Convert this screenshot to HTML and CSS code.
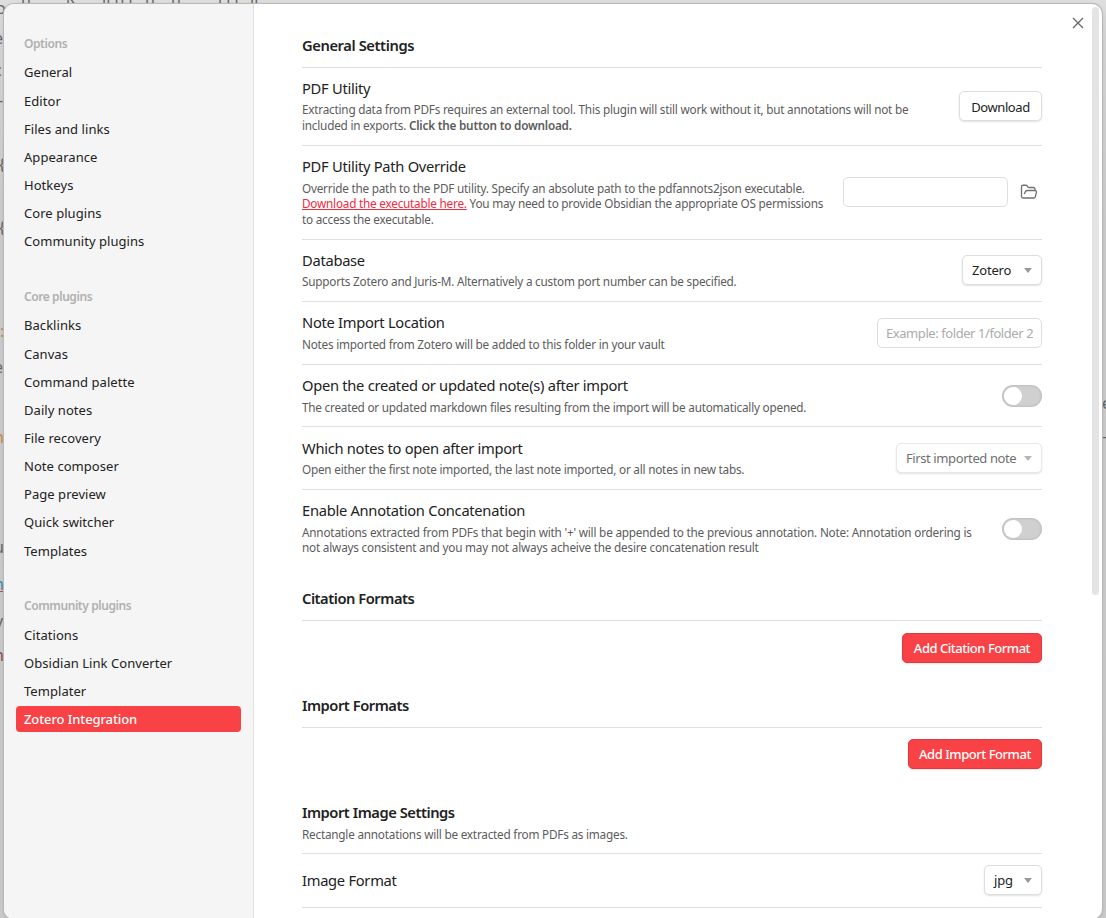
FILE: index.html
```html
<!DOCTYPE html>
<html lang="en">
<head>
<meta charset="utf-8">
<title>Settings</title>
<link rel="stylesheet" href="styles.css">
</head>
<body>
<div class="backdrop">
  <span class="frag" style="left:-4px;top:-3px">o</span>
  <span class="frag" style="left:21px;top:-14px">h</span>
  <span class="frag" style="left:66px;top:-14px">k</span>
  <span class="frag" style="left:102px;top:-14px">ll&nbsp;h&nbsp;l</span>
  <span class="frag" style="left:145px;top:-14px">h</span>
  <span class="frag" style="left:171px;top:-14px">h</span>
  <span class="frag" style="left:218px;top:-14px">l&nbsp;l&nbsp;l</span>
  <span class="frag" style="left:250px;top:-14px">ll</span>
  <span class="frag" style="left:-6px;top:27px">e</span>
  <span class="frag" style="left:-6px;top:59px">c</span>
  <span class="frag" style="left:-2px;top:89px">-</span>
  <span class="frag" style="left:-1px;top:153px">{</span>
  <span class="frag" style="left:-1px;top:216px">{</span>
  <span class="frag amber" style="left:0;top:320px">:</span>
  <span class="frag" style="left:-6px;top:356px">e</span>
  <span class="frag amber" style="left:-6px;top:426px">n</span>
  <span class="frag" style="left:-6px;top:536px">u</span>
  <span class="frag blue" style="left:-6px;top:573px">n</span>
  <span class="frag" style="left:-5px;top:610px">v</span>
  <span class="frag red" style="left:-6px;top:644px">n</span>
  <span class="frag" style="left:1102px;top:392px">e</span>
  <span class="frag" style="left:1102px;top:425px">-</span>
</div>
<div class="modal">
  <nav class="sidebar">
    <section class="group">
      <h2>Options</h2>
      <a>General</a><a>Editor</a><a>Files and links</a><a>Appearance</a><a>Hotkeys</a><a>Core plugins</a><a>Community plugins</a>
    </section>
    <section class="group">
      <h2>Core plugins</h2>
      <a>Backlinks</a><a>Canvas</a><a>Command palette</a><a>Daily notes</a><a>File recovery</a><a>Note composer</a><a>Page preview</a><a>Quick switcher</a><a>Templates</a>
    </section>
    <section class="group">
      <h2>Community plugins</h2>
      <a>Citations</a><a>Obsidian Link Converter</a><a>Templater</a><a class="active">Zotero Integration</a>
    </section>
  </nav>
  <main class="content">
    <h3 class="heading first">General Settings</h3>
    <div class="row">
      <div class="info"><div class="name">PDF Utility</div>
        <div class="desc">Extracting data from PDFs requires an external tool. This plugin will still work without it, but annotations will not be<br>included in exports. <b>Click the button to download.</b></div></div>
      <button class="btn">Download</button>
    </div>
    <div class="row">
      <div class="info"><div class="name">PDF Utility Path Override</div>
        <div class="desc">Override the path to the PDF utility. Specify an absolute path to the pdfannots2json executable.<br><a class="link">Download the executable here.</a> You may need to provide Obsidian the appropriate OS permissions<br>to access the executable.</div></div>
      <input class="field" type="text">
      <svg class="folder" viewBox="0 0 24 24"><path d="m6 14 1.5-2.9A2 2 0 0 1 9.24 10H20a2 2 0 0 1 1.94 2.5l-1.54 6a2 2 0 0 1-1.95 1.5H4a2 2 0 0 1-2-2V5a2 2 0 0 1 2-2h3.9a2 2 0 0 1 1.69.9l.81 1.2a2 2 0 0 0 1.67.9H18a2 2 0 0 1 2 2v2"/></svg>
    </div>
    <div class="row">
      <div class="info"><div class="name">Database</div>
        <div class="desc">Supports Zotero and Juris-M. Alternatively a custom port number can be specified.</div></div>
      <div class="select zotero">Zotero<i></i></div>
    </div>
    <div class="row">
      <div class="info"><div class="name">Note Import Location</div>
        <div class="desc">Notes imported from Zotero will be added to this folder in your vault</div></div>
      <input class="field" type="text" placeholder="Example: folder 1/folder 2">
    </div>
    <div class="row">
      <div class="info"><div class="name">Open the created or updated note(s) after import</div>
        <div class="desc">The created or updated markdown files resulting from the import will be automatically opened.</div></div>
      <div class="toggle"></div>
    </div>
    <div class="row">
      <div class="info"><div class="name">Which notes to open after import</div>
        <div class="desc">Open either the first note imported, the last note imported, or all notes in new tabs.</div></div>
      <div class="select disabled">First imported note<i></i></div>
    </div>
    <div class="row">
      <div class="info"><div class="name">Enable Annotation Concatenation</div>
        <div class="desc wide">Annotations extracted from PDFs that begin with '+' will be appended to the previous annotation. Note: Annotation ordering is<br>not always consistent and you may not always acheive the desire concatenation result</div></div>
      <div class="toggle"></div>
    </div>
    <h3 class="heading">Citation Formats</h3>
    <div class="row action"><button class="btn cta citation">Add Citation Format</button></div>
    <h3 class="heading">Import Formats</h3>
    <div class="row action"><button class="btn cta import">Add Import Format</button></div>
    <div class="image-head">
      <h3 class="heading">Import Image Settings</h3>
      <div class="desc">Rectangle annotations will be extracted from PDFs as images.</div>
    </div>
    <div class="row format"><div class="info"><div class="name solo">Image Format</div></div><div class="select jpg">jpg<i></i></div></div>
    <div class="row"></div>
  </main>
  <svg class="close" viewBox="0 0 12 12"><path d="M1 1 11 11M11 1 1 11"/></svg>
  <div class="scrollbar"></div>
</div>
</body>
</html>
```
FILE: styles.css
```css
* { box-sizing: border-box; }
body {
  margin: 0;
  height: 918px;
  overflow: hidden;
  position: relative;
  font-family: "Noto Sans", "Open Sans", sans-serif;
  font-size: 13px;
  color: #222;
  background: #d9d9d9;
}
.backdrop {
  position: absolute;
  inset: 0;
  overflow: hidden;
  background: linear-gradient(#dedede 0, #d6d6d6 40px, #cdcdcd 220px, #cbcbcb 100%);
}
.frag { position: absolute; font-size: 16px; line-height: 22px; color: #666; }
.frag.amber { color: #c98b45; }
.frag.blue { color: #3f86b5; text-decoration: underline #d44; }
.frag.red { color: #8e4a4a; }
.modal {
  position: relative;
  display: flex;
  width: 1098px;
  height: 915px;
  margin: 4px 0 0 4px;
  border-radius: 10px;
  overflow: hidden;
  background: #fff;
  box-shadow: 0 0 0 1px #b8b8b8, 0 2px 6px rgba(0, 0, 0, .12);
}
.sidebar {
  flex: 0 0 250px;
  padding: 28.1px 12px 0;
  background: #f5f5f5;
  border-right: 1px solid #e0e0e0;
}
.group { margin-bottom: 30.6px; }
.sidebar h2 {
  margin: 0;
  height: 27.3px;
  padding: 0 8px;
  font-size: 12px;
  line-height: 24px;
  font-weight: 600;
  color: #b0b0b0;
  letter-spacing: -.42px;
}
.sidebar a {
  display: block;
  height: 26.17px;
  margin-bottom: 2px;
  padding: 0 8px;
  line-height: 26.2px;
  letter-spacing: .05px;
  border-radius: 4px;
}
.sidebar a.active { background: #f84245; color: #fff; font-weight: 500; letter-spacing: -.1px; }
.content { flex: 0 0 788px; padding: 0 0 0 48px; }
.heading {
  display: flex;
  align-items: flex-start;
  margin: 0;
  height: 53.1px;
  padding-top: 21px;
  font-size: 14.7px;
  line-height: 20px;
  font-weight: 600;
  letter-spacing: -.46px;
}
.heading.first { height: 62.6px; padding-top: 31px; letter-spacing: -.4px; }
.row {
  display: flex;
  align-items: center;
  border-top: 1px solid #e0e0e0;
  padding: 11.25px 0;
}
.info { flex: 1; white-space: nowrap; }
.name { font-size: 14.7px; line-height: 19.5px; margin-bottom: 4px; letter-spacing: -.28px; }
.name.solo { margin: 0; }
.desc { font-size: 11.75px; line-height: 15.6px; color: #5c5c5c; white-space: nowrap; letter-spacing: -.22px; }
.desc.wide { letter-spacing: -.2px; }
.desc b { font-weight: 600; }
.link { color: #f02b3d; text-decoration: underline; }
.btn, .field, .select {
  height: 30px;
  border: 1px solid #dedede;
  border-radius: 5px;
  background: #fff;
  font: 13px "Noto Sans", "Open Sans", sans-serif;
  color: #222;
}
.btn, .select { box-shadow: 0 1px 2px rgba(0, 0, 0, .12); white-space: nowrap; }
.btn { width: 83px; padding: 1px 0 0; letter-spacing: -.4px; }
.cta { padding: 0; background: #f84245; border-color: #dc3b42; color: #fff; font-weight: 500; letter-spacing: -.47px; }
.cta.citation { width: 140px; }
.cta.import { width: 134px; }
.field { width: 165px; padding: 0 8px; letter-spacing: -.43px; }
.field::placeholder { color: #ababab; opacity: 1; }
.folder {
  width: 18px;
  height: 18px;
  margin: 0 4px 0 12px;
  fill: none;
  stroke: #707070;
  stroke-width: 1.75;
  stroke-linecap: round;
  stroke-linejoin: round;
}
.select {
  display: flex;
  align-items: center;
  justify-content: space-between;
  width: 80px;
  padding: 0 9px;
  letter-spacing: -.2px;
}
.select i { border: 4.5px solid transparent; border-top: 5px solid #999; border-bottom: 0; }
.select.disabled { width: 146px; color: #707070; border-color: #e8e8e8; letter-spacing: -.4px; }
.select.disabled i { border-top-color: #b5b5b5; }
.select.jpg { width: 58px; }
.toggle {
  width: 40px;
  height: 22px;
  padding: 2px;
  border-radius: 11px;
  background: #d0d0d0;
  box-shadow: inset 0 0 3px rgba(0, 0, 0, .18);
}
.toggle::before { content: ""; display: block; width: 18px; height: 18px; border-radius: 50%; background: #fff; }
.action { justify-content: flex-end; height: 53.6px; }
.format { height: 54px; }
.image-head { height: 72.3px; }
.image-head .heading { height: 46px; }
.close { position: absolute; left: 1068px; top: 13px; width: 12px; height: 12px; fill: none; stroke: #666; stroke-width: 1.3; }
.scrollbar { position: absolute; left: 1088px; top: 3px; width: 7px; height: 588px; border-radius: 4px; background: #e4e4e4; }
```
